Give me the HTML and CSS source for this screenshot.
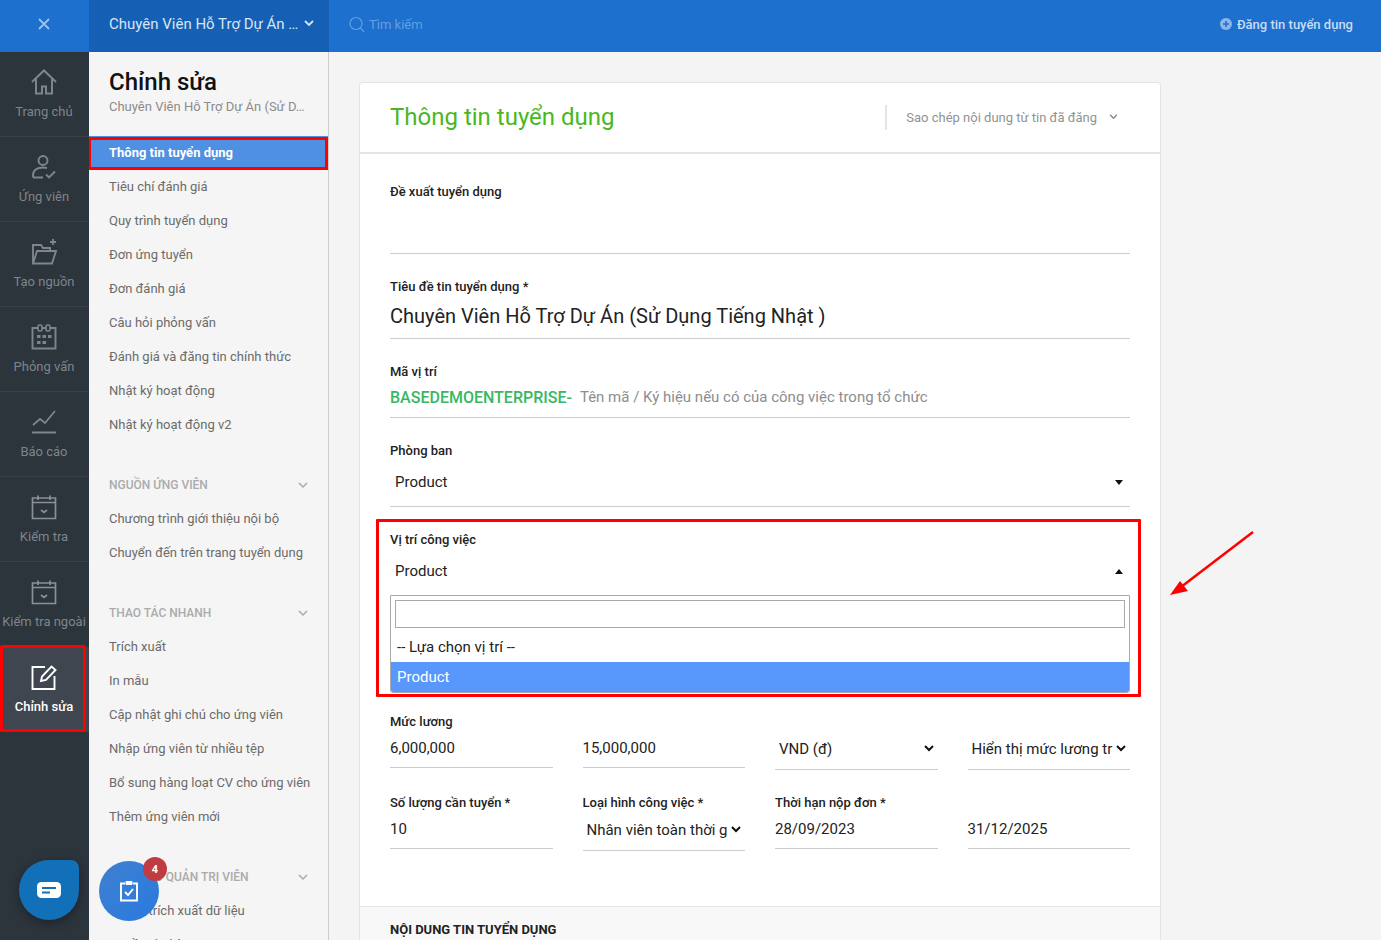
FILE: index.html
```html
<!DOCTYPE html>
<html lang="vi">
<head>
<meta charset="utf-8">
<title>Chỉnh sửa</title>
<link rel="stylesheet" href="styles.css">
</head>
<body>
<header class="topbar">
  <div class="tb-close"><svg width="14" height="14" viewBox="0 0 14 14"><path d="M2 2l10 10M12 2L2 12" stroke="#9dc1ea" stroke-width="1.8" fill="none"/></svg></div>
  <div class="tb-title"><span>Chuyên Viên Hỗ Trợ Dự Án …</span><svg width="10" height="7" viewBox="0 0 10 7"><path d="M1 1l4 4 4-4" stroke="#d6e5f6" stroke-width="1.8" fill="none"/></svg></div>
  <div class="tb-search"><svg width="16" height="17" viewBox="0 0 16 17"><circle cx="7" cy="7.5" r="6" stroke="#5f9ee2" stroke-width="1.2" fill="none"/><path d="M11.5 12l3.5 4" stroke="#5f9ee2" stroke-width="1.2"/></svg><span>Tìm kiếm</span></div>
  <div class="tb-action"><svg width="12" height="12" viewBox="0 0 12 12"><circle cx="6" cy="6" r="6" fill="#8db6e8"/><path d="M6 3v6M3 6h6" stroke="#1d70ce" stroke-width="1.6"/></svg><span>Đăng tin tuyển dụng</span></div>
</header>
<div class="body">
  <nav class="rail">
    <a class="rail-item"><svg class="ri" viewBox="0 0 26 26"><path d="M1 13L13 1.500 25 13M5 10v14.500h6v-7h4v7h6V10" fill="none" stroke="currentColor" stroke-width="2"/></svg><span>Trang chủ</span></a>
    <a class="rail-item"><svg class="ri" viewBox="0 0 26 26"><circle cx="12" cy="6.500" r="4.500" fill="none" stroke="currentColor" stroke-width="1.900"/><path d="M2 23.500v-2.500C2 16.500 6 13.500 12 13.500c1.500 0 2.800.2 4 .6M2 23.500h10M15 20.500l3 3 6-6" fill="none" stroke="currentColor" stroke-width="1.900"/></svg><span>Ứng viên</span></a>
    <a class="rail-item"><svg class="ri" viewBox="0 0 26 26"><path d="M2 24.500V6h8l2 3h7v3M2 24.500L6 12h19l-4 12.500H2z" fill="none" stroke="currentColor" stroke-width="1.900"/><path d="M22 0v6M19 3h6" stroke="currentColor" stroke-width="1.800"/></svg><span>Tạo nguồn</span></a>
    <a class="rail-item"><svg class="ri" viewBox="0 0 26 26"><path d="M7 4H1.500v20.500h23V4H19M11 4h4" fill="none" stroke="currentColor" stroke-width="1.900"/><rect x="7" y="1" width="4" height="6" rx="1.500" fill="none" stroke="currentColor" stroke-width="1.600"/><rect x="15" y="1" width="4" height="6" rx="1.500" fill="none" stroke="currentColor" stroke-width="1.600"/><path d="M6 11h3.500v3H6zM11.500 11H15v3h-3.500zM17 11h3.500v3H17zM6 17h3.500v3H6zM11.500 17H15v3h-3.500z" fill="currentColor"/></svg><span>Phỏng vấn</span></a>
    <a class="rail-item"><svg class="ri" viewBox="0 0 26 26"><path d="M2 16l7-6 5 4L24 2" fill="none" stroke="currentColor" stroke-width="1.800"/><path d="M1 23.500h24" stroke="currentColor" stroke-width="2"/></svg><span>Báo cáo</span></a>
    <a class="rail-item"><svg class="ri" viewBox="0 0 26 26"><path d="M1.500 4h23v20.500h-23zM1.500 8.500h23M7 1.500V6M19 1.500V6M10 16l3 2.500 3-2.500" fill="none" stroke="currentColor" stroke-width="1.700"/></svg><span>Kiểm tra</span></a>
    <a class="rail-item"><svg class="ri" viewBox="0 0 26 26"><path d="M1.500 4h23v20.500h-23zM1.500 8.500h23M7 1.500V6M19 1.500V6M10 16l3 2.500 3-2.500" fill="none" stroke="currentColor" stroke-width="1.700"/></svg><span>Kiểm tra ngoài</span></a>
    <a class="rail-item active"><svg class="ri" viewBox="0 0 26 26"><path d="M14 3H1.500v22h22V12" fill="none" stroke="currentColor" stroke-width="1.900"/><path d="M10 17l1-4.500L20.500 2.500l4 3.500-9.500 10z" fill="none" stroke="currentColor" stroke-width="1.900"/></svg><span>Chỉnh sửa</span></a>
  </nav>
  <aside class="side">
    <h1 class="side-title">Chỉnh sửa</h1>
    <p class="side-sub">Chuyên Viên Hỗ Trợ Dự Án (Sử D…</p>
    <ul class="menu">
      <li class="current">Thông tin tuyển dụng</li>
      <li>Tiêu chí đánh giá</li>
      <li>Quy trình tuyển dụng</li>
      <li>Đơn ứng tuyển</li>
      <li>Đơn đánh giá</li>
      <li>Câu hỏi phỏng vấn</li>
      <li>Đánh giá và đăng tin chính thức</li>
      <li>Nhật ký hoạt động</li>
      <li>Nhật ký hoạt động v2</li>
    </ul>
    <div class="group"><span>NGUỒN ỨNG VIÊN</span><svg width="10" height="7" viewBox="0 0 10 7"><path d="M1 1l4 4 4-4" stroke="#aaa" stroke-width="1.500" fill="none"/></svg></div>
    <ul class="menu">
      <li>Chương trình giới thiệu nội bộ</li>
      <li>Chuyển đến trên trang tuyển dụng</li>
    </ul>
    <div class="group"><span>THAO TÁC NHANH</span><svg width="10" height="7" viewBox="0 0 10 7"><path d="M1 1l4 4 4-4" stroke="#aaa" stroke-width="1.500" fill="none"/></svg></div>
    <ul class="menu">
      <li>Trích xuất</li>
      <li>In mẫu</li>
      <li>Cập nhật ghi chú cho ứng viên</li>
      <li>Nhập ứng viên từ nhiều tệp</li>
      <li>Bổ sung hàng loạt CV cho ứng viên</li>
      <li>Thêm ứng viên mới</li>
    </ul>
    <div class="group"><span>MỤC CHO QUẢN TRỊ VIÊN</span><svg width="10" height="7" viewBox="0 0 10 7"><path d="M1 1l4 4 4-4" stroke="#aaa" stroke-width="1.500" fill="none"/></svg></div>
    <ul class="menu">
      <li>Quyền trích xuất dữ liệu</li>
      <li>Nguồn dữ liệu</li>
    </ul>
  </aside>
  <main class="main">
    <section class="card">
      <div class="card-head">
        <h2>Thông tin tuyển dụng</h2>
        <div class="copy"><span>Sao chép nội dung từ tin đã đăng</span><svg width="9" height="6" viewBox="0 0 10 7"><path d="M1 1l4 4 4-4" stroke="#888" stroke-width="1.600" fill="none"/></svg></div>
      </div>
      <div class="form">
        <div class="field"><label>Đề xuất tuyển dụng</label><div class="ctl h53"></div></div>
        <div class="field"><label>Tiêu đề tin tuyển dụng *</label><div class="ctl h43 big">Chuyên Viên Hỗ Trợ Dự Án (Sử Dụng Tiếng Nhật )</div></div>
        <div class="field"><label>Mã vị trí</label><div class="ctl h37 code"><b>BASEDEMOENTERPRISE-</b><span>Tên mã / Ký hiệu nếu có của công việc trong tổ chức</span></div></div>
        <div class="field"><label>Phòng ban</label><div class="ctl h47 sel"><span>Product</span><i class="tri down"></i></div></div>
        <div class="field open">
          <label>Vị trí công việc</label>
          <div class="ctl h46 sel plain"><span>Product</span><i class="tri up"></i></div>
          <div class="drop">
            <div class="drop-search"></div>
            <div class="opt">-- Lựa chọn vị trí --</div>
            <div class="opt on">Product</div>
          </div>
        </div>
        <div class="grid">
          <div class="cell"><label>Mức lương</label><div class="ctl h38">6,000,000</div></div>
          <div class="cell"><label class="blank">&nbsp;</label><div class="ctl h38">15,000,000</div></div>
          <div class="cell"><label class="blank">&nbsp;</label><div class="ctl h40 nsel"><span>VND (đ)</span><svg width="10" height="7" viewBox="0 0 10 7"><path d="M1 1l4 4 4-4" stroke="#111" stroke-width="2" fill="none"/></svg></div></div>
          <div class="cell"><label class="blank">&nbsp;</label><div class="ctl h40 nsel"><span>Hiển thị mức lương tr</span><svg width="10" height="7" viewBox="0 0 10 7"><path d="M1 1l4 4 4-4" stroke="#111" stroke-width="2" fill="none"/></svg></div></div>
          <div class="cell"><label>Số lượng cần tuyển *</label><div class="ctl h38">10</div></div>
          <div class="cell"><label>Loại hình công việc *</label><div class="ctl h40 nsel"><span>Nhân viên toàn thời g</span><svg width="10" height="7" viewBox="0 0 10 7"><path d="M1 1l4 4 4-4" stroke="#111" stroke-width="2" fill="none"/></svg></div></div>
          <div class="cell"><label>Thời hạn nộp đơn *</label><div class="ctl h38">28/09/2023</div></div>
          <div class="cell"><label class="blank">&nbsp;</label><div class="ctl h38">31/12/2025</div></div>
        </div>
      </div>
      <div class="card-sec">NỘI DUNG TIN TUYỂN DỤNG</div>
    </section>
    <svg class="arrow" width="90" height="68" viewBox="0 0 90 68"><path d="M84 2L12 57" stroke="#f00" stroke-width="2.500" fill="none"/><path d="M1 65l10-14 8 10z" fill="#f00"/></svg>
  </main>
</div>
<div class="fab-chat"><svg width="24" height="16" viewBox="0 0 24 16"><rect width="24" height="16" rx="4.500" fill="#fff"/><path d="M5 6h14M5 10.500h8" stroke="#1270b8" stroke-width="2"/></svg></div>
<div class="fab-task"><svg width="20" height="22" viewBox="0 0 20 22"><path d="M6 3.500H2v17h16v-17h-4" fill="none" stroke="#fff" stroke-width="1.900"/><rect x="6.500" y="1" width="7" height="4" rx="1" fill="#fff"/><path d="M6 12l3 3 5-6" fill="none" stroke="#fff" stroke-width="1.900"/></svg><span class="badge">4</span></div>
</body>
</html>
```
FILE: styles.css
```css
*, *::before, *::after { box-sizing: border-box; }
html, body { margin: 0; height: 940px; overflow: hidden; }
body { font-family: Roboto, "Noto Sans", sans-serif; background: #f4f4f4; color: #222; position: relative; }
ul { list-style: none; margin: 0; padding: 0; }
h1, h2, p { margin: 0; font-weight: 400; }

.topbar { display: flex; height: 52px; background: #1d70ce; align-items: stretch; }
.tb-close { width: 89px; display: flex; align-items: center; justify-content: center; padding: 0 1px 4px 0; }
.tb-title { width: 240px; background: #1560b4; color: #d6e5f6; font-size: 15px; display: flex; align-items: center; justify-content: space-between; padding: 0 15px 5px 20px; }
.tb-search { flex: 1; display: flex; align-items: center; gap: 4px; padding: 0 0 4px 20px; color: #639fe3; font-size: 13px; }
.tb-action { display: flex; align-items: center; gap: 5px; padding: 0 28px 4px 0; color: #c8dcf4; font-size: 13px; font-weight: 500; }

.body { display: flex; height: 888px; }
.rail { width: 89px; background: #2c343c; flex: none; }
.rail-item { display: flex; flex-direction: column; align-items: center; height: 85px; padding: 17px 1px 0 0; border-bottom: 1px solid #383f47; color: #7f858b; font-size: 13px; position: relative; white-space: nowrap; }
.rail-item span { margin-top: 9px; line-height: 16px; }
.ri { width: 26px; height: 26px; display: block; }
.rail-item:nth-child(n+6):not(.active) .ri { color: #8a9096; }
.rail-item.active { background: #3f4650; color: #fff; font-weight: 500; border-bottom: 0; }
.rail-item.active::after { content: ""; position: absolute; left: 0; top: -2px; width: 86px; height: 87px; border: 3px solid #f00; border-radius: 2px; }
.rail-item:nth-child(7) { border-bottom: 0; }

.side { width: 240px; flex: none; background: #f5f5f5; border-right: 1px solid #ccc; overflow: hidden; }
.side-title { font-size: 24px; font-weight: 500; color: #111; line-height: 30px; padding: 15px 0 0 20px; }
.side-sub { font-size: 13px; color: #8b8b8b; line-height: 18px; padding: 1px 0 0 20px; white-space: nowrap; }
.side-sub + .menu { margin-top: 20px; }
.menu li { height: 34px; line-height: 34px; padding-left: 20px; font-size: 13px; color: #6b6b6b; white-space: nowrap; }
.menu li.current { background: #4f90e2; color: #fff; font-weight: 700; position: relative; }
.menu li.current::after { content: ""; position: absolute; left: -1px; right: 0; top: 1px; bottom: 0; border: 3px solid #f00; border-radius: 1px; }
.group { display: flex; justify-content: space-between; align-items: center; height: 34px; margin-top: 26px; padding: 0 20px; font-size: 12px; font-weight: 500; color: #ababab; }

.main { flex: 1; padding: 30px 0 0 30px; position: relative; min-width: 0; }
.card { width: 802px; background: #fff; border: 1px solid #e4e4e4; border-radius: 3px; }
.card-head { height: 71px; display: flex; align-items: center; justify-content: space-between; padding: 0 42px 1px 30px; border-bottom: 2px solid #e4e4e4; }
.card-head h2 { font-size: 24px; color: #48b81f; }
.copy { display: flex; align-items: center; gap: 12px; height: 25px; padding-left: 19px; border-left: 2px solid #e4e4e4; font-size: 13px; color: #929292; }

.form { padding: 29px 30px 55px; }
label { display: block; font-size: 13px; line-height: 18px; color: #222; font-weight: 500; white-space: nowrap; }
.field { margin-bottom: 24px; position: relative; }
.ctl { border-bottom: 1px solid #ccc; font-size: 15px; color: #222; display: flex; align-items: center; white-space: nowrap; padding-bottom: 2px; }
.h53 { height: 53px; }
.h43 { height: 43px; }
.h37 { height: 37px; }
.h38 { height: 38px; }
.h40 { height: 40px; }
.h46 { height: 46px; }
.h47 { height: 47px; }
.big { font-size: 20px; color: #222; }
.code { padding-bottom: 4px; }
.code b { color: #37b862; font-size: 16px; font-weight: 500; margin-right: 8px; }
.code span { color: #8d8d8d; font-size: 15px; }
.sel { justify-content: space-between; padding-left: 5px; padding-right: 7px; }
.plain { border-bottom: 0; }
.tri { width: 0; height: 0; border-left: 4px solid transparent; border-right: 4px solid transparent; }
.tri.down { border-top: 5px solid #111; }
.tri.up { border-bottom: 5px solid #111; }
.field.open { margin-bottom: 19px; }
.field.open::after { content: ""; position: absolute; left: -14px; right: -11px; top: -12px; bottom: -4px; border: 3px solid #f00; border-radius: 1px; pointer-events: none; }
.drop { border: 1px solid #aaa; border-radius: 0 0 3px 3px; height: 98px; padding-top: 4px; overflow: hidden; }
.drop-search { height: 28px; margin: 0 4px; border: 1px solid #aaa; }
.opt { height: 30px; line-height: 30px; padding-left: 6px; font-size: 15px; color: #222; }
.opt:nth-child(2) { margin-top: 4px; }
.opt.on { background: #5897fb; color: #fff; }

.grid { display: grid; grid-template-columns: repeat(4, 1fr); column-gap: 30px; row-gap: 23px; align-items: start; }
.cell label { height: 18px; padding-top: 1px; }
.nsel { justify-content: space-between; padding-left: 4px; padding-right: 4px; }

.card-sec { height: 60px; background: #f8f8f8; border-top: 1px solid #e8e8e8; padding: 14px 30px 0; font-size: 13px; font-weight: 700; color: #222; line-height: 17px; }
.arrow { position: absolute; left: 840px; top: 478px; }

.fab-chat { position: absolute; left: 19px; top: 860px; width: 60px; height: 60px; background: #1270b8; border-radius: 50% 8px 50% 50%; display: flex; align-items: center; justify-content: center; box-shadow: 0 3px 10px rgba(0,0,0,.35); }
.fab-task { position: absolute; left: 99px; top: 861px; width: 60px; height: 60px; border-radius: 50%; background: linear-gradient(135deg, #3f80cf, #2a7ae0); display: flex; align-items: center; justify-content: center; }
.badge { position: absolute; left: 44px; top: -4px; width: 24px; height: 24px; border-radius: 50%; background: #bf3d42; color: #fff; font-size: 11px; font-weight: 700; display: flex; align-items: center; justify-content: center; }
```
